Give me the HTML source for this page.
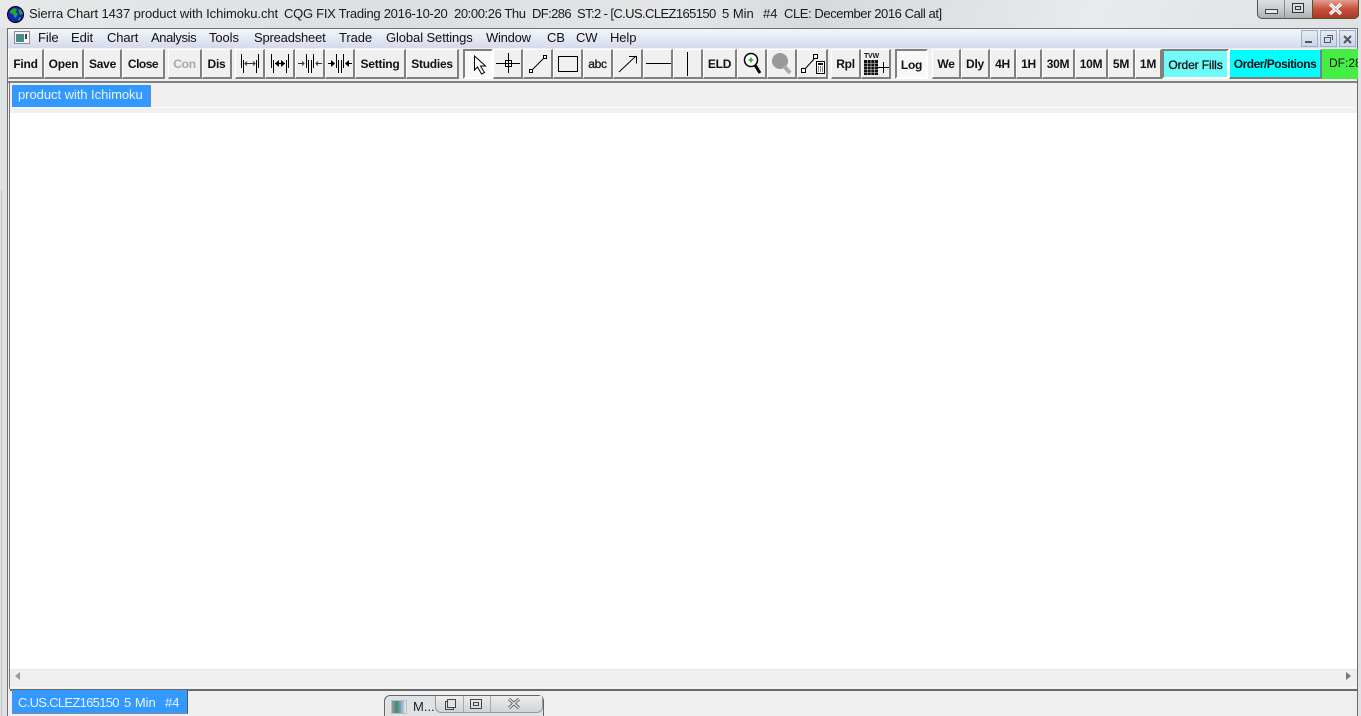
<!DOCTYPE html>
<html><head><meta charset="utf-8"><style>
html,body{margin:0;padding:0}
body{width:1361px;height:716px;overflow:hidden;position:relative;background:#e4e7e9;font-family:"Liberation Sans",sans-serif}
div,span,svg{position:absolute;box-sizing:border-box}
.t{font-size:13px;top:6px;color:#1a1a1a;white-space:pre;line-height:15px}
.m{font-size:13px;top:30px;color:#111;white-space:pre;line-height:16px;letter-spacing:-.1px}
.b{top:49px;height:30px;background:#f0f0f0;border-top:1px solid #fff;border-left:1px solid #fff;border-right:2px solid #808080;border-bottom:2px solid #808080;font-weight:bold;font-size:12px;line-height:28px;text-align:center;color:#111;white-space:pre;overflow:hidden;letter-spacing:-.25px}
.b svg{left:0;top:0}
.s{border:2px solid #808080;border-right-color:#fff;border-bottom-color:#fff;background:#f8f8f8}
.w{color:#e8f3ff;font-size:13px;white-space:pre;line-height:15px}
</style></head><body>
<div style="left:0;top:0;width:1361px;height:28px;background:linear-gradient(100deg,#e6e8ea 0%,#dcdfe1 30%,#e3e5e7 50%,#d6dadc 60%,#e8eaec 80%,#dfe2e4 100%)"></div>
<div style="left:0;top:28px;width:7px;height:688px;background:#dfe2e4"></div>
<div style="left:1358px;top:28px;width:3px;height:688px;background:#dfe2e4"></div>
<div style="left:1px;top:190px;width:1px;height:526px;background:#c4c8ca"></div>
<svg style="left:7px;top:6px" width="18" height="17" viewBox="0 0 18 17"><circle cx="8.500" cy="8.500" r="8" fill="#1420c8" stroke="#000"/><path d="M3 5l4-3 3 1-1 3 2 2-2 4-2-1-1-3-3-1zM11 3l3 1 2 4-3 1-1-3zM11 13l2-2 1 1-2 3z" fill="#22a82a"/></svg>
<span class="t" style="left:29px;letter-spacing:-.09px">Sierra Chart 1437 product with Ichimoku.cht</span>
<span class="t" style="left:284px;letter-spacing:-.27px">CQG FIX Trading 2016-10-20</span>
<span class="t" style="left:454px;letter-spacing:-.4px">20:00:26 Thu</span>
<span class="t" style="left:532px;letter-spacing:-.6px">DF:286</span>
<span class="t" style="left:577px;letter-spacing:-.6px">ST:2 - [C.US.CLEZ165150</span>
<span class="t" style="left:722px">5 Min</span>
<span class="t" style="left:763px">#4</span>
<span class="t" style="left:784px;letter-spacing:-.42px">CLE: December 2016 Call at]</span>
<!-- caption buttons -->
<div style="left:1257px;top:0;height:19px;width:102px;background:linear-gradient(#dcdfe1,#c9cdd0 50%,#a9aeb2);border:1px solid #555;border-top:0;border-radius:0 0 5px 5px"></div>
<div style="left:1312px;top:0;width:47px;height:19px;background:linear-gradient(#e0a090,#c8503a 50%,#a83a28);border:1px solid #552;border-top:0;border-radius:0 0 5px 0"></div>
<div style="left:1284px;top:0;width:1px;height:18px;background:#888"></div>
<div style="left:1265px;top:9px;width:13px;height:5px;background:#e8e8e8;border:1px solid #444"></div>
<div style="left:1292px;top:3px;width:12px;height:10px;border:1px solid #333;background:#ddd"></div>
<div style="left:1295px;top:6px;width:6px;height:4px;border:1px solid #333"></div>
<svg style="left:1328px;top:3px" width="15" height="12" viewBox="0 0 15 12"><path d="M2 1l11 10M13 1L2 11" stroke="#fff" stroke-width="3.400"/><path d="M2 1l11 10M13 1L2 11" stroke="#777" stroke-width=".5" fill="none"/></svg>
<!-- inner frame -->
<div style="left:7px;top:28px;width:1351px;height:688px;background:#f0f0f0;border:1px solid #6e6e6e;border-bottom:0"></div>
<div style="left:8px;top:29px;width:1349px;height:19px;background:linear-gradient(#f4f6fb,#d4daec)"></div>
<svg style="left:14px;top:31px" width="17" height="14" viewBox="0 0 17 14"><rect x=".5" y=".5" width="15" height="12" fill="#f4f4f4" stroke="#8a8f96"/><rect x="2" y="3" width="8" height="8" fill="#4a8a8a"/><rect x="11" y="3" width="2" height="5" fill="#444"/></svg>
<span class="m" style="left:38px">File</span><span class="m" style="left:71px">Edit</span><span class="m" style="left:107px">Chart</span><span class="m" style="left:151px;letter-spacing:-.4px">Analysis</span><span class="m" style="left:209px">Tools</span><span class="m" style="left:254px;letter-spacing:-.2px">Spreadsheet</span><span class="m" style="left:339px">Trade</span><span class="m" style="left:386px">Global Settings</span><span class="m" style="left:486px;letter-spacing:-.25px">Window</span><span class="m" style="left:547px">CB</span><span class="m" style="left:576px">CW</span><span class="m" style="left:610px">Help</span>
<!-- mdi buttons -->
<div style="left:1301px;top:30px;width:17px;height:17px;background:linear-gradient(#e6ecf6,#c8d4e6);border:1px solid #9fb0c6"></div>
<div style="left:1305px;top:41px;width:7px;height:2px;background:#555"></div>
<div style="left:1320px;top:30px;width:17px;height:17px;background:linear-gradient(#e6ecf6,#c8d4e6);border:1px solid #9fb0c6"></div>
<div style="left:1324px;top:37px;width:7px;height:6px;border:1px solid #555"></div><div style="left:1327px;top:35px;width:6px;height:5px;border:1px solid #555;border-left:0;border-bottom:0"></div>
<div style="left:1339px;top:30px;width:17px;height:17px;background:linear-gradient(#e6ecf6,#c8d4e6);border:1px solid #9fb0c6"></div>
<svg style="left:1343px;top:35px" width="10" height="9"><path d="M1 1l7 7M8 1L1 8" stroke="#555" stroke-width="2"/></svg>
<!-- toolbar -->
<div style="left:8px;top:48px;width:1349px;height:33px;background:#f0f0f0"></div>
<div class="b" style="left:8px;width:36px">Find</div>
<div class="b" style="left:44px;width:40px">Open</div>
<div class="b" style="left:84px;width:38px">Save</div>
<div class="b" style="left:122px;width:43px;letter-spacing:-.5px">Close</div>
<div class="b" style="left:168px;width:34px;color:#a8a8a8">Con</div>
<div class="b" style="left:202px;width:30px">Dis</div>
<div class="b" style="left:235px;width:30px"><svg width="28" height="27"><path d="M5.500 4v14M7.500 10v13M22.500 4v14M20.500 10v13" stroke="#000" fill="none"/><path d="M9 13.500h10M11 11.500l-2 2 2 2M17 11.500l2 2-2 2" stroke="#333" fill="none"/></svg></div>
<div class="b" style="left:265px;width:30px"><svg width="28" height="27"><path d="M5.500 4v14M7.500 10v13M22.500 4v14M20.500 10v13" stroke="#000" fill="none"/><path d="M9 13.500h10" stroke="#000"/><path d="M13 10l-4 3.500 4 3.500zM15 10l4 3.500-4 3.500z"/></svg></div>
<div class="b" style="left:295px;width:30px"><svg width="28" height="27"><path d="M10.500 4v14M12.500 10v13M17.500 4v14M15.500 10v13" stroke="#000" fill="none"/><path d="M2 13.500h6M6 11.500l2 2-2 2M26 13.500h-6M22 11.500l-2 2 2 2" stroke="#333" fill="none"/></svg></div>
<div class="b" style="left:325px;width:30px"><svg width="28" height="27"><path d="M10.500 4v14M12.500 10v13M17.500 4v14M15.500 10v13" stroke="#000" fill="none"/><path d="M2 13.500h3M23 13.500h3" stroke="#000"/><path d="M5 10l4 3.500-4 3.500zM23 10l-4 3.500 4 3.500z"/></svg></div>
<div class="b" style="left:355px;width:51px">Setting</div>
<div class="b" style="left:406px;width:53px">Studies</div>
<div class="b s" style="left:463px;width:30px"><svg width="26" height="26"><path d="M9.500 5v14l3-3 4 7 3-1.500-4-6.500h5z" fill="#fff" stroke="#000"/></svg></div>
<div class="b" style="left:493px;width:30px"><svg width="28" height="27"><path d="M2 13.500h24M14.500 3v20" stroke="#000" fill="none"/><rect x="11.500" y="10.500" width="6" height="6" fill="none" stroke="#000"/></svg></div>
<div class="b" style="left:523px;width:30px"><svg width="28" height="27"><path d="M7 21L21 7" stroke="#000"/><rect x="5.500" y="19.500" width="3" height="3" fill="#fff" stroke="#000"/><rect x="19.500" y="5.500" width="3" height="3" fill="#fff" stroke="#000"/></svg></div>
<div class="b" style="left:553px;width:30px"><svg width="28" height="27"><rect x="4.500" y="6.500" width="19" height="15" fill="none" stroke="#000"/></svg></div>
<div class="b" style="left:583px;width:30px;font-weight:normal;-webkit-text-stroke:.3px #222">abc</div>
<div class="b" style="left:613px;width:30px"><svg width="28" height="27"><path d="M5 22L22 6M15 6.500h7.500v7" stroke="#000" fill="none"/></svg></div>
<div class="b" style="left:643px;width:30px"><svg width="28" height="27"><path d="M2 13.500h25" stroke="#000"/></svg></div>
<div class="b" style="left:673px;width:30px"><svg width="28" height="27"><path d="M13.500 2v24" stroke="#000"/></svg></div>
<div class="b" style="left:703px;width:34px">ELD</div>
<div class="b" style="left:737px;width:30px"><svg width="28" height="27"><circle cx="13" cy="10" r="6.500" fill="#fff" stroke="#000" stroke-width="1.500"/><path d="M17 15l5 8" stroke="#000" stroke-width="3"/><path d="M10.500 10h5M13 7.500v5" stroke="#0a0" stroke-width="1.300"/></svg></div>
<div class="b" style="left:767px;width:30px"><svg width="28" height="27"><circle cx="12" cy="11" r="8" fill="#999"/><path d="M16 16l6 7" stroke="#aaa" stroke-width="4"/></svg></div>
<div class="b" style="left:797px;width:31px"><svg width="29" height="27"><path d="M6 20L17 8" stroke="#000"/><rect x="3.500" y="18.500" width="4" height="4" fill="#fff" stroke="#000"/><rect x="15.500" y="4.500" width="4" height="4" fill="#fff" stroke="#000"/><rect x="18.500" y="11.500" width="8" height="12" fill="#fff" stroke="#000"/><path d="M20 14h5" stroke="#111" stroke-width="2"/><path d="M20 17h5M20 19h5M20 21h5" stroke="#111" stroke-dasharray="1 1"/></svg></div>
<div class="b" style="left:831px;width:30px">Rpl</div>
<div class="b" style="left:861px;width:30px"><svg width="28" height="27"><text x="2" y="8" font-size="7" font-weight="bold" font-family="Liberation Sans" fill="#111">TVW</text><rect x="2" y="10" width="14" height="15" fill="#111"/><path d="M2 13.500h14M2 16.500h14M2 19.500h14M2 22.500h14M5.500 10v15M9 10v15M12.500 10v15" stroke="#ddd" stroke-width=".6"/><path d="M15 17.500h12M21.500 12v11" stroke="#000"/></svg></div>
<div class="b s" style="left:895px;width:33px;line-height:29px">Log</div>
<div class="b" style="left:932px;width:29px">We</div>
<div class="b" style="left:961px;width:29px">Dly</div>
<div class="b" style="left:990px;width:26px">4H</div>
<div class="b" style="left:1016px;width:26px">1H</div>
<div class="b" style="left:1042px;width:33px">30M</div>
<div class="b" style="left:1075px;width:33px">10M</div>
<div class="b" style="left:1108px;width:27px">5M</div>
<div class="b" style="left:1135px;width:27px">1M</div>
<div class="b" style="left:1162px;width:67px;border:2px solid #808080;border-right-color:#fff;border-bottom-color:#fff;background:#70fbfb;font-weight:normal;-webkit-text-stroke:.3px #111;line-height:29px;letter-spacing:-.1px">Order Fills</div>
<div class="b" style="left:1229px;width:93px;background:#00ffff;letter-spacing:-.5px">Order/Positions</div>
<div class="b" style="left:1322px;width:36px;background:#44ee44;border:0;font-weight:normal;text-align:left;padding-left:7px;line-height:29px;height:30px;letter-spacing:0">DF:286</div>
<div style="left:8px;top:81px;width:1349px;height:2px;background:#808080"></div>
<!-- tab strip + client -->
<div style="left:9px;top:83px;width:1348px;height:30px;background:#f0f0f0;border-left:1px solid #777"></div>
<div class="w" style="left:12px;top:85px;width:139px;height:23px;background:#3399ff;border-right:1px solid #7a8a9a;line-height:19px;padding-left:6px;letter-spacing:-.05px">product with Ichimoku</div>
<div style="left:10px;top:107px;width:1347px;height:1px;background:#fbfbfb"></div>
<div style="left:10px;top:113px;width:1347px;height:556px;background:#fff"></div>
<div style="left:9px;top:113px;width:1px;height:576px;background:#777"></div>
<!-- scrollbar -->
<div style="left:10px;top:669px;width:1347px;height:19px;background:#efefef;border-top:1px solid #e6e6e6;border-bottom:1px solid #f8f8f8"></div>
<svg style="left:15px;top:672px" width="6" height="9"><path d="M5 0v8L0 4z" fill="#999"/></svg>
<svg style="left:1345px;top:672px" width="6" height="9"><path d="M1 0v8l5-4z" fill="#777"/></svg>
<div style="left:10px;top:689px;width:1347px;height:2px;background:#6a6a6a"></div>
<div style="left:10px;top:691px;width:1347px;height:25px;background:#efefef"></div>
<div style="left:12px;top:690px;width:176px;height:24px;background:#3399ff;border-right:1px solid #556;border-bottom:1px solid #889"></div>
<span class="w" style="left:18px;top:695px;letter-spacing:-.7px">C.US.CLEZ165150</span>
<span class="w" style="left:124px;top:695px">5 Min</span>
<span class="w" style="left:165px;top:695px">#4</span>
<!-- minimized window -->
<div style="left:384px;top:695px;width:160px;height:21px;background:#dfe2e5;border:1px solid #666;border-bottom:0;border-radius:6px 6px 0 0"></div>
<div style="left:391px;top:700px;width:16px;height:14px;background:linear-gradient(90deg,#999,#3a8a7a 35%,#9ac 70%,#eee);border:1px solid #bbb"></div>
<span style="left:413px;top:699px;font-size:13px;line-height:15px;color:#222">M...</span>
<div style="left:435px;top:696px;width:108px;height:17px;background:linear-gradient(#eceef0,#cfd3d6);border:1px solid #9a9a9a;border-top:0;border-radius:0 0 6px 6px"></div>
<div style="left:463px;top:696px;width:1px;height:16px;background:#aaa"></div>
<div style="left:490px;top:696px;width:1px;height:16px;background:#aaa"></div>
<div style="left:445px;top:701px;width:9px;height:9px;border:1px solid #444"></div><div style="left:447px;top:699px;width:9px;height:9px;border:1px solid #444;background:#e0e2e4"></div>
<div style="left:470px;top:699px;width:12px;height:10px;border:1px solid #444"></div><div style="left:473px;top:702px;width:6px;height:4px;border:1px solid #444"></div>
<svg style="left:507px;top:698px" width="14" height="12"><path d="M2 1l10 9M12 1L2 10" stroke="#555" stroke-width="3"/><path d="M2 1l10 9M12 1L2 10" stroke="#eee" stroke-width="1.200"/></svg>
</body></html>
